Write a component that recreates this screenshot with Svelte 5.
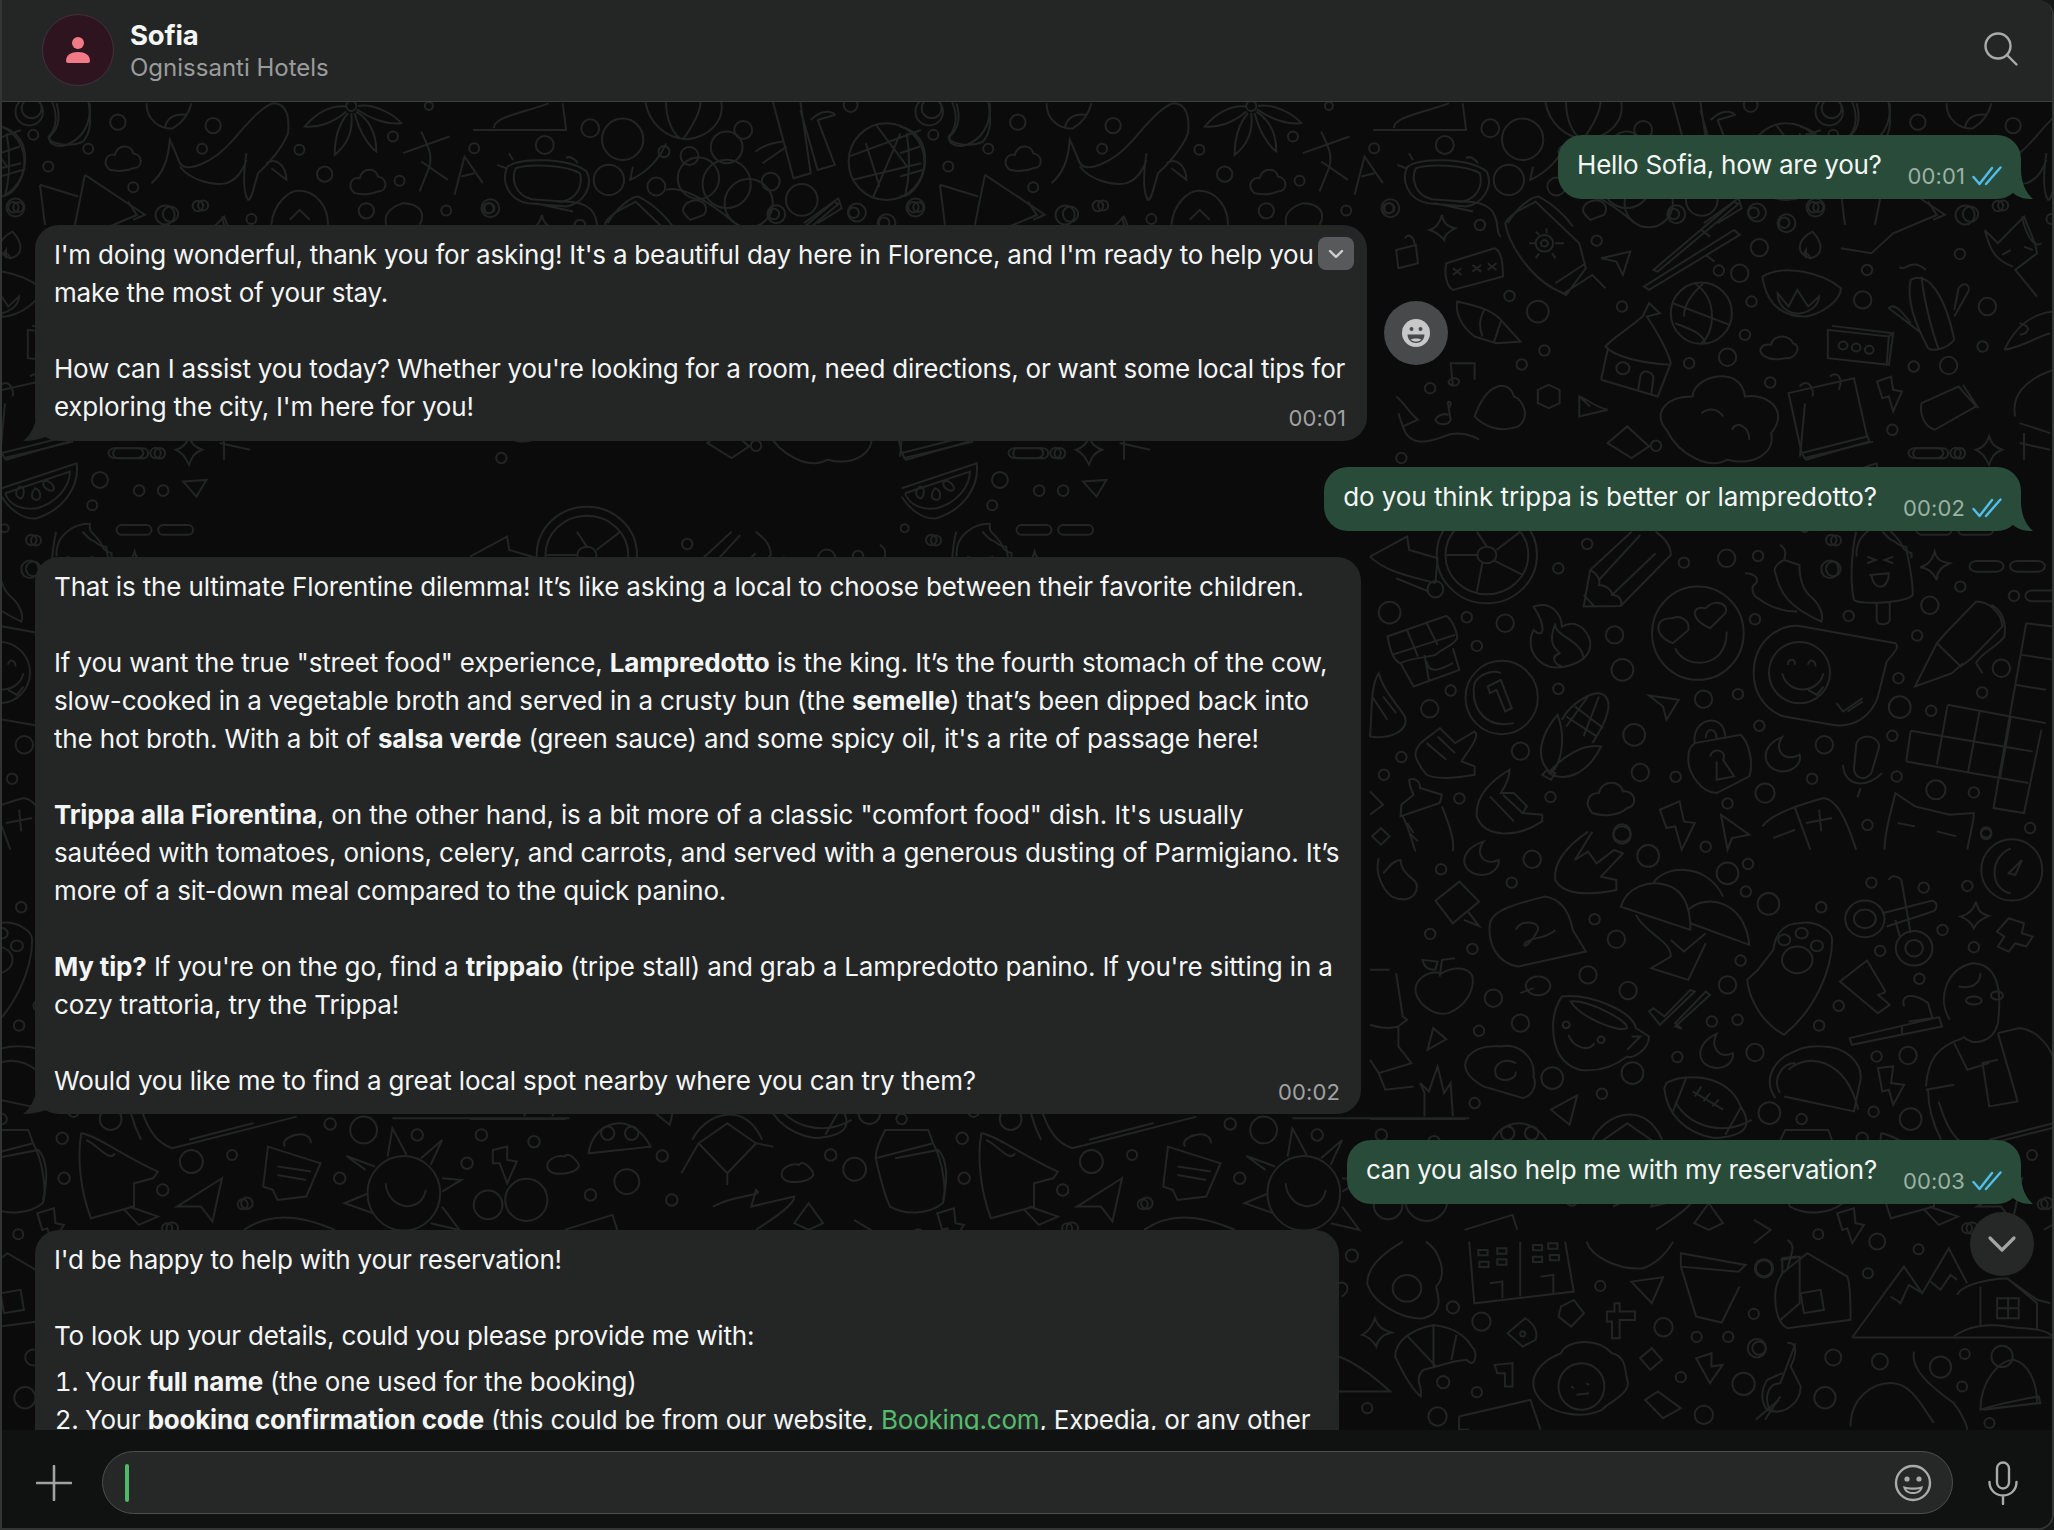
<script>
  // helper for ellipses drawn inside the stretched crop coordinates
  const el = (cx, cy, rx, ry) =>
    `M${cx - rx} ${cy}a${rx} ${ry} 0 1 0 ${rx * 2} 0a${rx} ${ry} 0 1 0 ${-rx * 2} 0Z`;
  const bar = (x, y, w, h) => {
    const r = h / 2;
    return `M${x + r} ${y}H${x + w - r}a${r} ${r} 0 0 1 0 ${h}H${x + r}a${r} ${r} 0 0 1 0 ${-h}Z`;
  };

  // wallpaper, one group per stretch of the tile (period is 900px across)
  const doodleSets = [
    {
      x: 0, y: 0, sx: 0.333, sy: 0.333,
      circles: [[100,405,15],[354,367,23],[640,377,23],[265,447,15],[607,447,15],[145,500,15],[899,450,15],[1180,410,15],[1424,445,15],[975,523,23],[1200,543,15],[400,562,15],[55,622,15],[512,643,23],[610,617,15],[755,658,15],[1100,633,23],[1340,632,15],[1470,625,15],[95,325,30],[1288,318,12]],
      paths: [
        "M455 550C490 520 505 480 510 420C525 450 535 480 540 490C560 520 640 490 700 420C760 350 790 320 820 310C860 310 870 350 865 400C850 440 810 490 775 520C760 570 755 600 745 600C730 580 730 530 740 460M540 500C570 540 640 560 680 550C710 540 730 510 740 480M800 490C830 470 860 500 860 540L815 505",
        el(1055,318,15,15),
        "M1040 335C1000 370 950 385 915 380C950 340 990 315 1040 320M1045 340C1010 380 1005 430 1005 465C1050 430 1060 385 1055 340M1065 340C1080 400 1110 440 1130 455C1130 400 1110 360 1070 335M1075 318C1120 310 1180 340 1205 370C1160 375 1110 355 1072 328",
        "M120 555L135 675M120 555L235 590M255 525L225 675M255 525L435 645L400 660",
        "M330 510C305 490 320 460 345 465C355 430 395 435 400 460C430 465 430 505 400 505C380 515 350 515 330 510Z",
        "M1065 580C1040 560 1055 530 1080 535C1090 500 1130 505 1135 530C1165 535 1165 575 1135 575C1115 585 1085 585 1065 580Z",
        "M0 380C50 390 80 430 75 490C70 540 40 590 0 590M0 460L60 440M0 530L70 510M20 400C30 460 30 530 15 590",
        "M170 310C180 350 180 380 150 410C140 430 170 445 200 435C240 420 275 380 270 310",
        "M440 310C440 360 480 390 520 385C560 360 570 330 575 310M495 385C500 350 530 340 560 345",
        "M1210 460L1350 410M1265 395C1280 430 1300 460 1290 500L1260 575M1265 485L1345 540M1365 585L1395 470L1450 550M1385 530L1425 520",
        "M1160 675C1150 640 1180 620 1210 610C1260 610 1280 640 1260 675",
        "M815 675C820 610 870 570 900 573C950 575 985 620 985 675M870 660L900 630L930 660"
      ]
    },
    {
      // top strip, middle of the tile
      x: 480, y: 100, sx: 0.689, sy: 0.333,
      circles: [[160,85,13],[207,118,30],[382,90,13],[358,142,23],[304,168,13],[267,155,8],[187,240,22],[256,260,13],[317,235,30],[358,252,35],[390,310,35],[467,300,23],[422,245,13],[430,343,13],[94,135,13],[15,325,13],[547,338,13],[632,323,13],[538,15,10],[652,35,20],[590,370,13]],
      paths: [
        "M40 200C60 170 130 175 155 215C165 260 150 310 125 320L70 310C40 300 30 240 40 200ZM52 205C70 190 125 195 145 220C150 260 140 295 120 305L75 298C50 285 45 235 52 205ZM80 310L135 335M125 175C130 165 140 180 142 190M25 195L38 205M42 160L48 180",
        "M240 5C245 70 270 115 300 118C335 110 355 60 350 5M270 5C270 60 280 100 290 115M320 5C320 50 300 100 295 118M270 130C260 180 240 220 218 240L222 200",
        "M425 5L455 235L480 220L465 5M465 30L490 210L515 195L490 60M400 155C420 120 445 130 440 120M410 190L445 140M480 60C500 20 515 40 515 45L490 60",
        el(590,185,55,115),
        "M535 170L640 90M540 240L640 190M575 75L620 200M560 130L580 260M610 100L570 295",
        "M685 5C695 50 690 90 680 110C680 130 710 145 730 125C745 90 740 40 738 5",
        "M185 370C200 320 220 290 230 290C250 310 270 350 280 380",
        "M-10 90H125L120 10M20 85C20 50 60 40 100 10",
        "M270 270C290 255 330 300 370 370M300 310C320 285 335 320 325 345L305 360C295 340 290 330 300 310Z",
        "M470 370L520 295L525 325L490 370"
      ]
    },
    {
      // right column, y 200 to 530
      x: 1370, y: 200, sx: 0.436, sy: 0.333,
      circles: [[42,25,12],[252,75,12],[320,288,12],[385,335,25],[520,122,12],[578,320,12],[697,42,12],[880,38,12],[950,68,12],[893,143,20],[800,212,12],[848,220,20],[875,305,12],[1140,210,12],[1130,300,20],[1353,162,12],[1416,320,20],[1405,440,12],[1247,500,12],[1327,497,20],[860,405,12],[820,472,20],[732,490,12],[918,548,12],[1198,690,12],[1343,760,12],[656,738,12],[400,452,12],[348,494,12],[138,565,12],[72,775,12],[1017,22,12],[1365,45,22],[1440,18,12]],
      paths: [
        "M380 5L480 130L495 205L450 285L420 265C370 230 320 140 310 70C320 40 360 20 380 5ZM425 250L495 190M445 280L510 225L540 265",
        el(400,130,20,25), el(400,130,8,10),
        "M405 85V100M365 130H380M425 130H445M380 95L388 105M380 175L388 160M425 175L418 160",
        "M80 115C85 100 100 105 103 135M60 150L105 135L110 190L65 205Z",
        "M175 190L285 145C300 150 305 180 305 230L190 270C175 260 170 220 175 190Z",
        "M190 205L210 225M210 205L190 225M235 195L255 215M255 195L235 215M270 190L290 210M290 190L270 210",
        "M165 45C170 75 180 80 195 85C180 95 170 105 170 120C160 105 150 95 137 90C150 85 160 70 165 45Z",
        "M530 175L597 155L580 225L565 185Z",
        "M650 210L835 5L845 12L660 215ZM628 260L835 90L848 105L640 270ZM760 90L780 110M770 165L790 185",
        el(760,340,70,92),
        "M695 310L825 375M745 250C800 300 790 400 760 430M700 370C740 390 760 400 770 430M765 250C730 290 720 320 720 350",
        "M900 230C950 190 1040 220 1080 265C1080 300 1040 340 1000 350C950 350 910 320 900 230ZM1000 170C975 150 985 115 1015 95C1040 130 1040 165 1010 175ZM1000 175L1000 150C990 170 1005 150 1010 175",
        "M935 280L960 320L980 270L1005 320L1030 290C1030 320 1000 345 975 340C950 335 935 310 935 280Z",
        "M530 540L660 590L690 490C680 440 650 380 635 350L665 340L640 310L625 350C590 390 560 410 540 440C560 470 620 490 690 495M530 540L545 450",
        el(580,505,15,18),
        "M615 570L620 530C625 505 650 515 650 535L645 585",
        "M1240 240C1280 210 1320 290 1340 420C1320 450 1290 455 1280 445C1250 370 1230 300 1240 240ZM1265 230C1270 300 1290 400 1305 450M1215 200C1225 220 1240 170 1275 210M1340 330L1350 265C1365 240 1380 260 1370 280L1340 350M1260 395L1190 325C1200 310 1215 325 1240 370",
        "M1050 390L1190 410L1200 400L1190 495L1050 475ZM1060 378L1200 400M1190 410L1185 495",
        el(1085,437,10,12), el(1115,443,10,12), el(1145,450,10,12),
        "M905 470C885 450 900 430 920 435C925 400 965 405 970 430C990 435 980 480 950 475C935 480 920 480 905 470Z",
        "M680 690C650 650 670 590 740 590C740 530 850 490 860 590C920 580 960 640 920 700C930 760 880 800 820 780C780 810 710 770 680 690ZM830 690C840 660 870 680 870 720M760 640C780 620 800 630 810 650",
        "M960 580L1110 535L1140 710L990 760ZM990 760L1000 780L1145 725L1140 705M985 560C1005 530 1020 570 1015 590M1055 530C1075 510 1085 540 1075 570",
        "M1265 610L1350 560L1390 620L1295 690C1270 680 1260 640 1265 610ZM1360 555L1395 625",
        bar(1235,745,80,30),
        "M1410 90L1440 130L1500 50L1525 130L1530 160L1480 210L1530 290M1410 90C1420 140 1430 180 1475 200M1450 165L1470 150M1500 140L1520 150",
        "M200 305C250 320 280 330 300 360L345 425L290 430L240 410C210 380 195 340 200 305ZM262 330C250 360 250 380 258 410M300 365L285 425",
        "M1163 545L1195 530L1200 570L1220 575L1200 635L1190 590L1175 595Z",
        "M1420 710C1425 730 1430 740 1450 750C1430 760 1425 775 1420 795C1410 770 1405 760 1390 750C1405 745 1415 730 1420 710Z",
        "M60 590C80 610 90 640 110 660L75 680L65 640M75 680C90 740 130 730 170 710C200 690 240 710 250 720",
        "M240 650C270 540 320 540 330 590C350 600 370 650 340 680C300 700 260 680 240 650Z",
        "M190 555L185 490L240 490L240 540M180 545C190 525 215 540 200 555C190 560 180 555 180 545Z",
        "M178 605L185 660C180 680 155 675 150 660C155 645 170 640 180 645M178 605C190 605 185 620 180 625",
        "M410 555L435 570L435 610L410 625L385 610L385 570Z",
        "M545 730L590 680L640 740L600 775Z",
        "M480 590C500 600 515 620 545 630L480 650ZM480 590L505 620",
        "M200 5C320 -5 280 100 300 110M1080 145L1150 160L1200 100L1300 45L1280 5",
        "M1455 450C1480 380 1520 340 1568 335M1455 450C1500 440 1530 410 1560 400M1490 370C1520 380 1510 400 1490 405",
        "M1480 650C1470 590 1500 540 1568 510M1490 670L1560 700M1490 730L1560 750M1500 700V780",
        "M1495 50C1510 130 1530 140 1540 130"
      ]
    },
    {
      // right column, y 530 to 850
      x: 1370, y: 530, sx: 0.436, sy: 0.333,
      circles: [[45,248,25],[222,262,12],[310,280,20],[245,348,12],[432,115,12],[498,42,12],[720,98,12],[818,85,20],[890,78,12],[1055,118,20],[561,315,20],[579,420,25],[432,477,12],[185,482,12],[137,537,20],[345,664,20],[72,682,12],[32,735,12],[205,806,12],[414,802,12],[606,615,25],[620,728,20],[701,741,12],[765,508,20],[844,493,12],[883,268,12],[1098,258,12],[1284,226,20],[1255,317,12],[1212,445,12],[1215,532,25],[1287,543,12],[1198,618,12],[1208,740,12],[1014,747,12],[1042,645,20],[893,588,12],[906,790,22],[820,821,12],[1298,780,22],[1385,788,12],[1141,886,12],[1413,908,12],[1514,895,12],[1448,415,20],[1404,488,12],[1354,170,12],[1477,198,12],[578,910,20],[1058,30,12]],
      paths: [
        el(268,75,115,145), el(268,75,95,118), el(268,75,22,25),
        "M268 50L245 5M290 60L345 5M245 75H175M258 97L245 185M285 92L350 135",
        "M0 80L85 20L90 60L155 85L150 160M0 80C40 130 100 140 150 160M60 145L135 185",
        el(150,178,18,25),
        "M600 5L505 120L490 230L575 228L690 75C690 40 670 20 655 5M505 120C520 130 530 150 525 165C540 165 555 180 555 195C570 195 580 210 575 228M620 15L525 150M655 70L555 195M490 195L515 230",
        el(752,310,105,140),
        "M695 340C650 320 650 260 695 265C710 255 735 270 730 300ZM780 295C735 270 735 225 770 235C790 205 825 220 815 250ZM700 355C720 420 820 420 818 305",
        "M940 45C960 60 950 80 950 90C930 100 925 120 930 130C940 190 960 230 1035 275C1040 260 1035 230 1015 205C990 180 985 140 985 105L950 90M860 130C880 130 895 145 885 160C870 170 880 200 890 205C920 235 950 245 980 245",
        "M1115 5C1105 60 1100 150 1110 210C1120 225 1230 220 1245 195C1245 130 1230 70 1230 50C1210 50 1205 30 1195 30C1185 20 1180 10 1175 5M1162 220V270C1165 290 1190 285 1192 270V215M1140 80L1160 90L1140 100M1200 80L1180 90L1200 100M1145 135L1190 130C1190 180 1155 185 1150 135",
        "M1295 65C1300 90 1310 95 1330 100C1310 110 1300 125 1300 150C1290 125 1280 115 1262 112C1280 105 1290 90 1295 65Z",
        bar(1375,93,78,32), bar(1468,93,80,32), bar(1503,182,80,32),
        "M1390 215L1320 310L1300 340L1355 410L1380 385L1450 290C1450 250 1420 215 1390 215ZM1300 340L1250 470L1335 430L1360 400M1425 225C1450 240 1460 280 1455 320C1440 350 1400 370 1390 400L1405 430",
        "M1505 280L1568 290M1505 280L1430 835L1500 850L1540 600M1495 375L1568 390M1480 465L1550 480M1325 525L1550 580M1240 603L1520 665M1230 695L1510 760M1240 603L1230 695M1325 525L1300 705M1398 545L1372 725M1470 560L1445 745",
        "M40 320L175 258C190 270 200 310 200 325C190 350 170 350 150 375C120 385 90 385 70 400C50 390 45 350 40 320ZM70 400L100 470L205 420L190 355M85 300L110 380M130 280L155 345M50 375L195 315M125 375L135 450M130 395C135 430 155 425 190 400",
        "M375 230C420 210 440 260 440 290C480 260 510 320 505 350C500 400 440 420 410 410C370 390 360 340 375 300C400 330 405 290 375 230ZM425 280C420 320 490 330 490 390M425 280C405 350 430 360 435 370C415 380 420 400 440 410",
        el(302,503,83,110),
        "M330 580C250 600 230 510 240 460C250 430 285 420 300 430M270 470L300 450L325 535L310 545L290 480L275 490Z",
        "M430 555C400 600 370 680 415 730C440 700 450 620 430 555ZM440 570C460 520 520 470 540 500C560 530 530 600 510 640M410 730C450 760 500 730 530 650C490 640 440 680 410 730ZM395 735L415 750L425 730L405 722ZM450 560L520 620M470 530L535 595M500 500L450 590M525 500L490 620",
        "M20 430C0 470 5 550 0 620C50 630 90 600 80 560C60 520 30 480 20 430ZM5 500L40 570M30 500L60 550",
        "M105 680C100 640 140 620 160 595L195 640L240 605C255 620 220 670 210 695L240 710V735C200 745 150 750 130 735C115 715 110 700 105 680ZM130 640L175 690M155 620L195 670",
        "M320 720C280 750 240 800 245 860C260 920 330 930 395 875V855L350 850L360 830L330 790L300 790C310 770 320 745 320 720ZM275 800L330 875M305 795L350 850",
        "M640 497L708 510L680 570L672 530Z",
        "M745 640C735 570 810 540 815 620M770 625C770 590 795 595 795 625M745 640L850 615C870 640 880 700 870 740L795 790C760 790 730 730 730 690C730 660 735 650 745 640ZM780 680C785 650 820 660 810 690L835 740L795 750V695",
        "M985 288L1205 340C1215 350 1205 365 1185 395L1165 500C1150 560 1110 595 1060 585L950 560C900 540 880 480 880 430C880 340 930 285 985 288Z",
        el(985,428,70,92),
        "M945 430C960 500 1030 490 1040 430M1005 480L1025 495L1040 470M958 405C960 385 975 385 975 405M1005 405C1005 385 1022 390 1022 410M1070 520L1085 545L1130 505M1095 545L1130 515",
        "M945 622C890 650 900 720 945 725C980 725 990 690 985 675C950 700 925 660 945 622Z",
        "M1115 650C1115 610 1165 610 1168 650L1150 730C1130 760 1110 740 1110 715ZM1085 705C1085 760 1130 785 1175 730M1125 775L1118 803",
        "M510 850C490 820 500 790 525 790C530 750 575 750 580 785C610 780 615 830 590 835C570 860 530 860 510 850Z",
        "M90 750C100 745 115 750 115 775L165 795L160 820L70 860L72 825L100 795C95 780 90 770 90 750ZM75 860C95 910 100 960 105 965M165 830C180 880 195 930 190 965M100 910L85 880M110 935L90 910",
        "M665 840L710 815L720 875L745 880L715 960L700 890L680 895Z",
        "M805 855L870 915L830 925L820 960Z",
        "M900 890C920 850 1000 820 1040 805C1070 810 1090 860 1115 960M975 835L1010 960M1030 840L1035 905M1000 880L1060 865M925 925L975 900",
        "M1180 960C1180 900 1195 850 1205 790L1250 830L1330 855L1385 850C1385 880 1375 920 1370 960M1210 880L1250 890M1300 905L1345 920",
        "M25 895L45 920L25 945L5 920ZM0 785L30 825L0 855"
      ]
    },
    {
      // right column, y 830 to 1100
      x: 1370, y: 830, sx: 0.436, sy: 0.333,
      circles: [[163,118,12],[325,158,12],[372,88,20],[638,78,25],[770,50,12],[867,102,12],[820,130,25],[862,185,12],[914,222,25],[1035,232,12],[515,268,12],[565,328,20],[138,312,12],[235,357,12],[500,435,20],[592,482,20],[283,505,20],[820,465,20],[850,392,12],[345,580,20],[250,603,12],[784,575,12],[843,570,12],[705,682,12],[883,668,20],[602,730,25],[418,745,25],[532,792,12],[240,820,12],[916,850,25],[990,868,12],[1155,846,12],[1240,868,25],[1075,528,12],[1030,587,12],[1170,363,12],[1385,352,12],[1313,300,12],[1150,158,12],[1270,173,12],[1370,168,12],[1260,447,12],[1162,680,12],[1234,677,20],[1413,12,12],[578,15,20]],
      paths: [
        "M260 35C200 60 205 130 255 135C285 135 298 105 295 90C260 110 240 70 260 35Z",
        "M500 5C450 50 420 100 425 150C440 190 490 200 565 180V150L530 140L580 70L560 60L520 100L500 65L470 90L510 5",
        "M205 155L150 212L190 280L250 215L205 155ZM225 245L250 288L215 270",
        "M400 200C430 205 455 230 465 300L495 365L340 410C290 400 270 340 275 280C280 240 340 220 400 200ZM335 300C340 270 390 270 385 300C370 340 350 360 355 340C370 320 400 330 425 300",
        "M165 430C130 420 100 450 105 490C115 530 150 560 180 550C220 530 240 480 235 440C225 410 190 410 165 430ZM160 440L165 390L195 385M120 390L155 395L150 420C130 420 125 410 120 390Z",
        "M575 230C590 170 640 150 680 165C720 180 735 230 735 300ZM650 160C670 110 770 90 810 200M730 240C770 190 860 210 870 345L735 280M610 255C630 310 690 330 690 380L645 415L730 450L770 340M690 330L720 365L770 310",
        "M1060 330C1060 300 1020 270 985 280C950 280 930 310 925 360L890 420L865 450C870 510 900 580 950 615C1020 540 1060 420 1060 330Z",
        el(980,390,35,40), el(950,330,14,16), el(990,310,14,16), el(1025,348,14,16),
        el(1135,267,45,55), el(1135,267,25,28), el(1248,355,42,52), el(1248,355,20,25),
        "M1175 250L1290 212C1305 220 1300 240 1290 245L1185 290M1190 150C1195 130 1220 140 1220 160L1240 310M1205 270L1215 320",
        el(1472,120,70,92),
        "M1470 190C1420 180 1420 80 1470 55M1465 130L1495 90L1480 135Z",
        "M1390 215C1395 245 1400 250 1420 258C1400 268 1390 280 1385 295C1380 280 1370 268 1355 260C1370 255 1385 240 1390 215Z",
        "M1465 265L1500 280L1495 310L1520 320L1505 350L1480 340L1465 365L1440 350L1455 320L1438 305Z",
        "M1140 392L1078 455L1165 550L1192 525L1165 495C1175 490 1185 490 1180 480Z",
        "M1100 625L1305 562L1312 590L1105 645ZM1220 585V615M1225 530C1215 490 1250 490 1280 520L1290 565L1235 575",
        "M1330 570C1300 510 1320 420 1380 400C1440 400 1450 480 1440 580C1430 640 1380 650 1360 620M1350 470C1390 480 1400 450 1400 430",
        el(1385,512,18,12), el(1438,497,14,12),
        "M1275 770C1280 690 1300 650 1360 625M1440 610L1490 595C1530 600 1560 650 1568 690M1275 780L1340 765M1280 780C1280 830 1290 880 1310 930M1340 640L1370 720L1420 700M1440 610L1480 790L1485 815L1420 830L1405 700L1440 690",
        "M440 500C500 490 600 540 610 595L640 620C640 660 600 690 590 680C550 720 510 725 480 720C430 700 420 640 420 590C420 550 430 520 440 500ZM460 515C500 510 590 570 590 595C570 610 480 560 460 515ZM455 615C465 650 500 670 515 640M590 660L620 620L600 620",
        el(450,585,8,10), el(530,630,8,10),
        "M640 545L665 585L745 485L735 480L675 560L650 535ZM700 590L780 495L770 485L700 580L715 597Z",
        "M795 612C745 640 745 710 795 715C825 715 835 685 832 670C800 690 780 650 795 612Z",
        "M930 805C910 770 910 720 950 680C980 660 1000 645 1040 650C1090 650 1130 700 1125 750L1110 845L950 800M960 720C1000 670 1090 680 1120 840M940 790C920 740 950 700 975 700",
        "M680 760C720 730 820 730 850 830C880 890 860 920 790 925C720 910 680 850 675 775ZM725 745L695 845M850 835L815 915M740 785L810 840M760 770L745 800M780 790L765 815M800 810L785 830",
        "M225 680C250 640 290 650 300 650C340 640 380 680 375 740C385 770 370 800 350 805L260 770C220 740 210 710 225 680ZM335 700C300 680 280 710 290 740C305 760 335 750 335 725",
        "M125 860V790L115 760L135 785L155 710L170 790L185 760L190 860M0 868H220",
        "M65 590V650L95 700L20 730L35 780L100 770M20 730L0 690M60 430L75 560L85 570L65 590C40 600 10 590 0 585M45 420L0 420",
        "M20 85C10 130 30 180 50 200C100 230 120 170 100 150C80 130 70 110 70 90C50 90 40 120 30 130",
        "M145 595L175 628L132 660Z",
        "M1165 715L1200 710L1195 760L1225 765L1200 825L1190 780L1175 785Z",
        "M415 840L475 797L458 885Z",
        "M345 490L375 475M385 440a28 28 0 1 0 1 0",
        "M510 930C540 850 630 810 670 930",
        "M1568 880L1420 930",
      ]
    },
    {
      // wide strip under the second reply, left side of the tile
      x: 0, y: 1100, sx: 0.957, sy: 0.333,
      circles: [[200,185,12],[65,115,6],[345,72,6],[380,90,14],[436,105,6],[503,105,6],[558,125,6],[488,190,6],[355,235,6],[258,310,6],[170,270,6],[67,235,6],[692,168,6],[868,165,6],[893,208,12],[617,285,6],[702,300,6],[655,245,13],[510,315,15],[550,300,22],[635,100,7],[660,100,7],[180,385,6]],
      paths: [
        el(422,280,38,112),
        "M382 210L362 168L392 200M405 170L410 85L425 165M440 175L462 120L450 195M462 235L482 240L462 275M462 320L480 390L450 370M390 340L360 310L385 280M403 250C405 330 440 345 445 270",
        "M85 100C100 105 130 170 165 215L160 235L140 250V320L95 355C85 280 80 180 85 100ZM90 120C100 130 115 190 120 160M135 320L165 350L145 375L130 330",
        "M280 140L335 190L320 290L290 300L285 270L275 260ZM298 140C290 110 325 80 325 130M290 200L325 215M290 225L320 240",
        "M232 235L222 365L210 320L185 320Z",
        "M615 160C620 60 660 30 680 140Z",
        "M760 70L790 130L760 220L730 130ZM730 130L712 220M790 130L808 140M760 220V255",
        "M925 90L970 90L975 130L915 175C915 145 920 120 925 90ZM915 175C920 240 925 290 930 320C945 345 970 345 985 310C990 280 985 180 975 130",
        "M575 215C565 190 580 160 590 170C595 150 605 190 605 200C600 225 580 225 575 215Z",
        "M820 240C810 215 825 185 835 195C840 175 850 215 850 225C845 250 825 250 820 240Z",
        "M515 150L530 140V180L540 185L530 250L522 190L515 190Z",
        "M255 390C280 340 310 340 350 390",
        "M-5 175L40 150C50 180 50 240 45 300M145 5C155 100 165 130 180 145L310 50",
        "M410 55H595M845 310L860 370L845 390L830 370Z",
        "M745 320C770 280 800 290 790 270L785 320L830 290C830 320 800 370 790 390",
        "M590 390L640 345L645 390",
        "M810 5C825 80 860 110 890 60"
      ]
    },
    {
      // left edge, under the first reply
      x: 0, y: 400, sx: 0.333, sy: 0.333,
      circles: [[480,160,16],[300,240,24],[418,272,16],[490,272,16],[277,316,15],[108,422,15],[100,507,22],[14,385,12]],
      paths: [
        "M5 265L230 190C240 260 190 330 110 355C70 360 30 330 5 290M15 280L210 215C210 260 170 310 110 325C70 330 30 320 15 280",
        "M60 260C80 260 70 300 60 295C45 290 45 270 60 260ZM105 265C125 270 125 300 110 300C95 300 90 285 105 265ZM135 240C165 250 170 275 150 272C130 265 125 250 135 240Z",
        bar(340,145,105,30), bar(350,375,105,30), bar(475,375,105,30),
        "M170 470C165 400 230 370 270 372C265 400 285 400 295 420C310 430 300 450 335 460V475",
        "M0 170L15 10M10 175L220 125",
        "M550 245L620 240L590 290Z"
      ]
    },
    {
      // bottom of the tile, seen right of the last reply
      x: 1000, y: 1240, sx: 0.51, sy: 0.333,
      circles: [[690,47,12],[888,202,12],[944,245,18],[1177,138,10],[1301,262,18],[1366,291,10],[1428,291,10],[1484,325,18],[1498,85,18],[1478,222,10],[1335,412,10],[1458,432,22],[869,427,12],[935,457,10],[720,505,10],[858,530,18],[1380,525,18],[1025,282,5]],
      paths: [
        "M790 5C750 40 720 80 720 130C730 190 790 240 830 235C870 220 860 170 855 140C880 100 860 30 835 5",
        el(798,145,28,40),
        "M920 5L930 190L1125 155L1108 5M1020 5L1020 170",
        "M938 30h18v16h-18ZM975 25h18v16h-18ZM940 65h18v16h-18ZM975 58h18v16h-18ZM1045 15h18v16h-18ZM1075 10h18v16h-18ZM1045 50h18v16h-18ZM1078 45h18v16h-18Z",
        "M960 130L985 125L985 175M1060 110L1085 105L1085 160",
        "M1150 5C1160 50 1210 90 1260 85C1290 70 1310 30 1320 5",
        "M1238 125L1300 112L1278 190Z",
        "M1335 40L1462 75L1448 95L1335 80ZM1335 80L1365 230L1415 248L1450 140",
        "M735 235C740 260 750 270 768 278C750 285 740 300 738 320C730 300 722 290 710 285C722 275 730 260 735 235Z",
        "M850 255C800 270 775 310 775 350C790 400 810 450 825 470C830 440 810 420 830 390L855 380L890 365L915 360C930 390 940 340 925 320C910 280 880 260 850 255ZM800 290L855 380M850 255V380M895 285L885 360",
        "M1030 235C1050 255 1055 280 1050 300L1025 320L995 280Z",
        "M1100 200L1125 180L1145 220L1120 260L1095 230ZM1215 215H1245V240H1215L1215 295H1200V245H1190V215H1205V190H1215Z",
        "M1100 340C1110 300 1170 290 1200 340C1230 350 1225 400 1230 420C1240 460 1190 490 1180 510C1140 540 1080 520 1060 480C1030 430 1050 370 1100 340Z",
        el(1140,440,45,70),
        "M1120 440L1125 445M1150 430L1155 435M1130 465L1155 460",
        "M1278 325L1298 360L1275 390L1255 355Z",
        "M970 375L1005 370L1005 440H990V400H975Z",
        "M1265 480L1290 455L1335 505L1300 535Z",
        "M1395 340L1365 355L1392 430L1417 375L1395 380Z",
        "M900 530L1040 480L1060 570M920 570H900V530",
        "M664 350C700 370 740 420 765 455H664",
        "M664 130C680 120 690 150 670 170",
        "M1530 60L1568 50V190L1530 240",
        "M1560 310L1530 430C1500 430 1500 490 1510 510M1500 540L1530 470"
      ]
    },
    {
      // far right, bottom corner
      x: 1754, y: 1140, sx: 0.333, sy: 0.333,
      circles: [[835,45,15],[867,193,15],[640,265,15],[193,283,15],[370,305,24],[494,328,15],[30,385,24],[342,400,15],[238,653,24],[378,665,24],[560,682,32],[633,643,15],[625,740,15],[213,774,32],[707,850,15],[15,625,20]],
      paths: [
        "M85 400L160 340L280 410C290 430 290 530 290 540L100 565C70 550 60 500 65 450C70 420 80 410 85 400ZM85 400V355L130 350M100 390C110 340 130 320 100 300",
        "M140 460L200 450L210 510L150 520Z",
        "M295 593H900M295 593L450 380L505 460L585 325L640 430M410 470C440 490 430 480 440 490L465 435L505 460M530 425L560 450L590 405L610 420",
        "M610 465C620 440 680 420 760 415L850 480L890 490M760 415L850 490V570M680 440V560",
        "M730 475H795V535H730ZM763 475V535M730 505H795",
        "M600 590C640 560 700 550 760 560C820 570 860 560 900 590",
        "M250 220L300 205L305 250L330 255L295 310L280 265L265 270Z",
        "M680 810C680 720 740 660 780 660C820 670 850 720 850 790ZM680 810C740 790 800 780 855 770L860 790L690 810",
        el(745,650,32,32),
        "M480 635C470 690 530 740 600 790C630 830 640 860 640 870",
        "M290 860C290 770 360 730 410 730C470 730 500 790 540 850",
        "M100 610C130 605 130 640 110 680L140 740C140 790 90 830 40 810C20 790 20 750 40 720L85 700",
        "M75 780L5 840",
        "M0 240L50 270L0 310"
      ]
    }
  ];

  const tileOffsets = [-1800, -900, 0, 900, 1800];
</script>

<div class="window">
  <header class="topbar">
    <div class="avatar">
      <svg width="26" height="28" viewBox="0 0 26 28" fill="#f27a87">
        <circle cx="13" cy="7" r="6" />
        <path d="M1 25c0-6 5-9 12-9s12 3 12 9c0 1-1 2-2 2H3c-1 0-2-1-2-2z" />
      </svg>
    </div>
    <div class="who">
      <div class="name">Sofia</div>
      <div class="org">Ognissanti Hotels</div>
    </div>
    <svg class="search" width="36" height="36" viewBox="0 0 36 36" fill="none" stroke="#a9abab" stroke-width="2.4" stroke-linecap="round">
      <circle cx="15" cy="15" r="12.5" />
      <path d="M24 24l9.5 9.5" />
    </svg>
  </header>

  <main class="chat">
    <svg class="wallpaper" width="2054" height="1328" viewBox="0 102 2054 1328" fill="none" stroke="#232424" stroke-width="2" aria-hidden="true">
      <defs>
        <g id="tile">
          {#each doodleSets as set}
            <g transform="translate({set.x} {set.y}) scale({set.sx} {set.sy})">
              {#each set.paths as d}
                <path {d} vector-effect="non-scaling-stroke" />
              {/each}
            </g>
            {#each set.circles as c}
              <circle cx={set.x + c[0] * set.sx} cy={set.y + c[1] * set.sy} r={c[2] * set.sx} />
            {/each}
          {/each}
        </g>
      </defs>
      {#each tileOffsets as dx}
        <use href="#tile" x={dx} y="0" />
      {/each}
    </svg>

    <div class="thread">
      <div class="bubble sent">
        <span>Hello Sofia, how are you?</span>
        <span class="meta">00:01
          <svg width="30" height="20" viewBox="0 0 30 20" fill="none" stroke="#53bdeb" stroke-width="2.4" stroke-linecap="round" stroke-linejoin="round"><path d="M1.500 11l6 7L20 2M14 18L28.500 1.500" /></svg>
        </span>
        <svg class="tail-out" width="22" height="30" viewBox="0 0 22 30"><path d="M0 0h8c0 14 5 24 12 30-8 0-14-1-20-6z" fill="#284c39" /></svg>
      </div>

      <div class="bubble recv w1">
        <button class="chip" aria-label="Menu">
          <svg width="16" height="10" viewBox="0 0 16 10" fill="none" stroke="#d0d0d0" stroke-width="2.4" stroke-linecap="round" stroke-linejoin="round"><path d="M2 2l6 6 6-6" /></svg>
        </button>
        <svg class="tail-in" width="28" height="30" viewBox="0 0 28 30"><path d="M28 0H14C14 12 8 24 0 30c10 0 18-2 28-6z" fill="#242626" /></svg>
        <p>I'm doing wonderful, thank you for asking! It's a beautiful day here in Florence, and I'm ready to help you<br />make the most of your stay.</p>
        <p class="flush">How can I assist you today? Whether you're looking for a room, need directions, or want some local tips for</p>
        <div class="endline"><span>exploring the city, I'm here for you!</span><span class="meta">00:01</span></div>
        <div class="react">
          <svg width="28" height="28" viewBox="0 0 28 28">
            <circle cx="14" cy="14" r="14" fill="#c8c8c8" />
            <circle cx="9.500" cy="10" r="2" fill="#47494a" />
            <circle cx="18.500" cy="10" r="2" fill="#47494a" />
            <path d="M5.500 15.500h17c0 5-4 8.500-8.500 8.500s-8.500-3.500-8.500-8.500z" fill="#47494a" />
            <path d="M8.500 20.500c3-1.500 8-1.500 11 0-3 2.800-8 2.800-11 0z" fill="#c8c8c8" />
          </svg>
        </div>
      </div>

      <div class="bubble sent roomy">
        <span>do you think trippa is better or lampredotto?</span>
        <span class="meta">00:02
          <svg width="30" height="20" viewBox="0 0 30 20" fill="none" stroke="#53bdeb" stroke-width="2.4" stroke-linecap="round" stroke-linejoin="round"><path d="M1.500 11l6 7L20 2M14 18L28.500 1.500" /></svg>
        </span>
        <svg class="tail-out" width="22" height="30" viewBox="0 0 22 30"><path d="M0 0h8c0 14 5 24 12 30-8 0-14-1-20-6z" fill="#284c39" /></svg>
      </div>

      <div class="bubble recv w2">
        <svg class="tail-in" width="28" height="30" viewBox="0 0 28 30"><path d="M28 0H14C14 12 8 24 0 30c10 0 18-2 28-6z" fill="#242626" /></svg>
        <p>That is the ultimate Florentine dilemma! It’s like asking a local to choose between their favorite children.</p>
        <p>If you want the true "street food" experience, <b>Lampredotto</b> is the king. It’s the fourth stomach of the cow,<br />slow-cooked in a vegetable broth and served in a crusty bun (the <b>semelle</b>) that’s been dipped back into<br />the hot broth. With a bit of <b>salsa verde</b> (green sauce) and some spicy oil, it's a rite of passage here!</p>
        <p><b>Trippa alla Fiorentina</b>, on the other hand, is a bit more of a classic "comfort food" dish. It's usually<br />sautéed with tomatoes, onions, celery, and carrots, and served with a generous dusting of Parmigiano. It’s<br />more of a sit-down meal compared to the quick panino.</p>
        <p><b>My tip?</b> If you're on the go, find a <b>trippaio</b> (tripe stall) and grab a Lampredotto panino. If you're sitting in a<br />cozy trattoria, try the Trippa!</p>
        <div class="endline"><span>Would you like me to find a great local spot nearby where you can try them?</span><span class="meta">00:02</span></div>
      </div>

      <div class="bubble sent">
        <span>can you also help me with my reservation?</span>
        <span class="meta">00:03
          <svg width="30" height="20" viewBox="0 0 30 20" fill="none" stroke="#53bdeb" stroke-width="2.4" stroke-linecap="round" stroke-linejoin="round"><path d="M1.500 11l6 7L20 2M14 18L28.500 1.500" /></svg>
        </span>
        <svg class="tail-out" width="22" height="30" viewBox="0 0 22 30"><path d="M0 0h8c0 14 5 24 12 30-8 0-14-1-20-6z" fill="#284c39" /></svg>
      </div>

      <div class="bubble recv w3">
        <p>I'd be happy to help with your reservation!</p>
        <p class="tight">To look up your details, could you please provide me with:</p>
        <ol>
          <li>Your <b>full name</b> (the one used for the booking)</li>
          <li>Your <b>booking confirmation code</b> (this could be from our website, <span class="link">Booking.com</span>, Expedia, or any other</li>
        </ol>
      </div>
    </div>

    <button class="jump" aria-label="Scroll down">
      <svg width="30" height="18" viewBox="0 0 30 18" fill="none" stroke="#a3a5a5" stroke-width="3.200" stroke-linecap="round" stroke-linejoin="round"><path d="M3 3l12 12L27 3" /></svg>
    </button>
  </main>

  <footer class="composer">
    <svg class="plus" width="36" height="36" viewBox="0 0 36 36" stroke="#a0a2a2" stroke-width="2.600" stroke-linecap="round"><path d="M18 1v34M1 18h34" /></svg>
    <div class="field">
      <span class="caret"></span>
      <svg class="smile" width="38" height="38" viewBox="0 0 38 38" fill="none" stroke="#a9abab" stroke-width="2.400">
        <circle cx="19" cy="19" r="17" />
        <circle cx="13" cy="15" r="2.600" fill="#a9abab" stroke="none" />
        <circle cx="25" cy="15" r="2.600" fill="#a9abab" stroke="none" />
        <path d="M9 22c6 2 14 2 20 0-1 6-5 8-10 8s-9-2-10-8z" fill="#a9abab" stroke="none" />
        <path d="M12 25c4 1 10 1 14 0-2 2.500-4 3-7 3s-5-.5-7-3z" fill="#262828" stroke="none" />
      </svg>
    </div>
    <svg class="mic" width="30" height="44" viewBox="0 0 30 44" fill="none" stroke="#a9abab" stroke-width="2.400" stroke-linecap="round">
      <rect x="9" y="1.500" width="12" height="26" rx="6" />
      <path d="M1.500 21c0 8 6 13.500 13.500 13.500S28.500 29 28.500 21M15 35v8" />
    </svg>
  </footer>
</div>

<style>
  :global(body) {
    margin: 0;
    background: #161717;
  }

  .window {
    width: 2054px;
    height: 1530px;
    box-sizing: border-box;
    display: flex;
    flex-direction: column;
    border: solid #333535;
    border-width: 0 2px 2px 2px;
    border-radius: 0 16px 16px 0;
    overflow: hidden;
    font-family: Inter, "Liberation Sans", sans-serif;
    color: #f4f5f5;
  }

  .topbar {
    flex: none;
    height: 102px;
    box-sizing: border-box;
    display: flex;
    align-items: center;
    padding: 0 33px 0 40px;
    background: #242626;
    border-bottom: 1px solid #3c3e3e;
  }

  .avatar {
    width: 70px;
    height: 70px;
    margin-top: -2px;
    border-radius: 50%;
    background: #2e141f;
    border: 1px solid #45303a;
    display: flex;
    align-items: center;
    justify-content: center;
  }

  .who {
    margin-left: 16px;
    margin-top: 2px;
    flex: 1;
  }

  .name {
    font-size: 27.500px;
    line-height: 33px;
    font-weight: 700;
    letter-spacing: -0.2px;
  }

  .org {
    font-size: 24px;
    line-height: 32px;
    color: #9a9c9c;
  }

  .search {
    margin-top: -4px;
  }

  .chat {
    flex: 1;
    min-height: 0;
    position: relative;
    overflow: hidden;
    background: #0b0b0b;
  }

  .wallpaper {
    position: absolute;
    top: 0;
    left: -2px;
  }

  .thread {
    position: relative;
    display: flex;
    flex-direction: column;
    gap: 26px;
    padding: 33px 31px 0 33px;
    font-size: 26px;
    line-height: 38px;
    letter-spacing: -0.22px;
    white-space: nowrap;
  }

  .bubble {
    position: relative;
    box-sizing: border-box;
    border-radius: 24px;
    padding: 11px 21px 15px 19px;
  }

  .sent {
    align-self: flex-end;
    display: flex;
    align-items: flex-end;
    gap: 26px;
    letter-spacing: -0.28px;
    background: #284c39;
  }

  .sent.roomy {
    letter-spacing: -0.08px;
  }

  .recv {
    align-self: flex-start;
    background: #242626;
  }

  .w1 { width: 1332px; }
  .w2 { width: 1326px; height: 557px; letter-spacing: -0.15px; }
  .w3 { width: 1304px; }

  .bubble p {
    margin: 0 0 38px;
  }

  .bubble p.tight {
    margin-bottom: 8px;
  }

  .bubble p.flush {
    margin-bottom: 0;
  }

  .endline {
    display: flex;
    justify-content: space-between;
    align-items: flex-end;
  }

  .meta {
    display: inline-flex;
    align-items: center;
    gap: 7px;
    margin-bottom: -6px;
    font-size: 22px;
    line-height: 28px;
    letter-spacing: 0.1px;
    color: #a0a2a2;
  }

  .sent .meta {
    color: #9db0a5;
    margin-right: -2px;
  }

  .tail-out {
    position: absolute;
    right: -14px;
    bottom: 0;
  }

  .tail-in {
    position: absolute;
    left: -12px;
    bottom: 0;
  }

  .chip {
    position: absolute;
    top: 12px;
    right: 13px;
    width: 36px;
    height: 33px;
    padding: 0;
    border: 0;
    border-radius: 8px;
    background: #58595a;
    display: flex;
    align-items: center;
    justify-content: center;
  }

  .react {
    position: absolute;
    top: 76px;
    right: -81px;
    width: 64px;
    height: 64px;
    border-radius: 50%;
    background: #47494a;
    display: flex;
    align-items: center;
    justify-content: center;
  }

  .bubble ol {
    margin: 0;
    padding-left: 31px;
  }

  .link {
    color: #53bd6b;
  }

  .jump {
    position: absolute;
    top: 1110px;
    right: 18px;
    width: 64px;
    height: 64px;
    padding: 0;
    border: 0;
    border-radius: 50%;
    background: #262827;
    display: flex;
    align-items: center;
    justify-content: center;
  }

  .composer {
    flex: none;
    height: 98px;
    box-sizing: border-box;
    display: flex;
    align-items: center;
    padding: 7px 34px 0 34px;
    background: #101111;
  }

  .plus {
    flex: none;
  }

  .field {
    flex: 1;
    height: 63px;
    box-sizing: border-box;
    margin: 0 35px 0 30px;
    padding: 0 20px 0 22px;
    display: flex;
    align-items: center;
    justify-content: space-between;
    border: 1px solid #4d4e4e;
    border-radius: 32px;
    background: #262828;
  }

  .caret {
    width: 4px;
    height: 38px;
    border-radius: 2px;
    background: #4fb965;
  }

  .mic {
    flex: none;
  }
</style>
